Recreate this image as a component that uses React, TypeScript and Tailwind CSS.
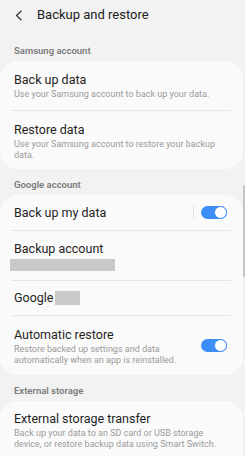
import React from "react";

function Toggle() {
  return (
    <div className="relative h-[13px] w-[26px] shrink-0 rounded-full bg-[#3e8ef7]">
      <div className="absolute right-0 top-0 h-[13px] w-[13px] rounded-full border-[1.5px] border-[#3e8ef7] bg-white" />
    </div>
  );
}

function Label({ children }: { children: React.ReactNode }) {
  return (
    <div className="flex h-[26px] items-end px-[14px] pb-[4px] text-[9.5px] font-semibold leading-[13px] text-[#7b7b7b]">
      {children}
    </div>
  );
}

function Divider() {
  return <div className="mx-[12px] h-px bg-[#e6e6e6]" />;
}

function Row({ title, sub, pb = "pb-[9px]" }: { title: string; sub?: string; pb?: string }) {
  return (
    <div className={`px-[14px] pt-[11px] ${pb}`}>
      <div className="text-[12.5px] leading-[15px] text-[#1f1f1f]">{title}</div>
      {sub && <div className="mt-[2px] text-[9px] leading-[11.5px] text-[#9a9a9a]">{sub}</div>}
    </div>
  );
}

export default function App() {
  return (
    <div className="relative h-[456px] w-[245px] overflow-hidden bg-[#f2f2f2] font-['Roboto',sans-serif]">
      {/* header */}
      <div className="flex h-[30px] items-center pl-[15px]">
        <svg width="8" height="11" viewBox="0 0 8 11" className="shrink-0">
          <polyline points="6.5,0.8 1.5,5.5 6.5,10.2" fill="none" stroke="#333" strokeWidth="1.2" />
        </svg>
        <span className="ml-[14px] text-[13px] leading-[16px] text-[#222]">Backup and restore</span>
      </div>

      <div className="h-[5px]" />
      <Label>Samsung account</Label>
      <div className="mr-[2px] rounded-[18px] bg-[#fafafa]">
        <Row title="Back up data" sub="Use your Samsung account to back up your data." />
        <Divider />
        <Row title="Restore data" sub="Use your Samsung account to restore your backup data." pb="pb-[7px]" />
      </div>

      <Label>Google account</Label>
      <div className="mr-[2px] rounded-[18px] bg-[#fafafa]">
        <div className="flex h-[35px] items-center px-[14px]">
          <span className="flex-1 text-[12.5px] leading-[15px] text-[#1f1f1f]">Back up my data</span>
          <div className="mr-[7px] h-[13px] w-px bg-[#e2e2e2]" />
          <Toggle />
          <div className="w-[2px]" />
        </div>
        <Divider />
        <div className="px-[14px] pb-[9px] pt-[10px]">
          <div className="text-[12.5px] leading-[15px] text-[#1f1f1f]">Backup account</div>
          <div className="-ml-[4px] mt-[3px] h-[12px] w-[105px] bg-[#c9c9c9]" />
        </div>
        <Divider />
        <div className="flex h-[34px] items-center px-[14px]">
          <span className="text-[12.5px] leading-[15px] text-[#1f1f1f]">Google</span>
          <div className="ml-[2px] h-[14px] w-[25px] bg-[#c9c9c9]" />
        </div>
        <Divider />
        <div className="flex items-center pr-[16px]">
          <div className="flex-1">
            <Row
              title="Automatic restore"
              sub="Restore backed up settings and data automatically when an app is reinstalled."
              pb="pb-[8px]"
            />
          </div>
          <Toggle />
        </div>
      </div>

      <Label>External storage</Label>
      <div className="mr-[2px] rounded-[18px] bg-[#fafafa]">
        <div className="px-[14px] pt-[10px]">
          <div className="text-[12.5px] leading-[15px] text-[#1f1f1f]">External storage transfer</div>
          <div className="mt-[2px] text-[9px] leading-[11.5px] text-[#9a9a9a]">
            Back up your data to an SD card or USB storage device, or restore backup data using Smart Switch.
          </div>
        </div>
        <div className="h-[20px]" />
      </div>

      {/* scrollbar */}
      <div className="absolute right-0 top-[185px] h-[92px] w-[2px] rounded-full bg-[#c4c4c4]" />
    </div>
  );
}
